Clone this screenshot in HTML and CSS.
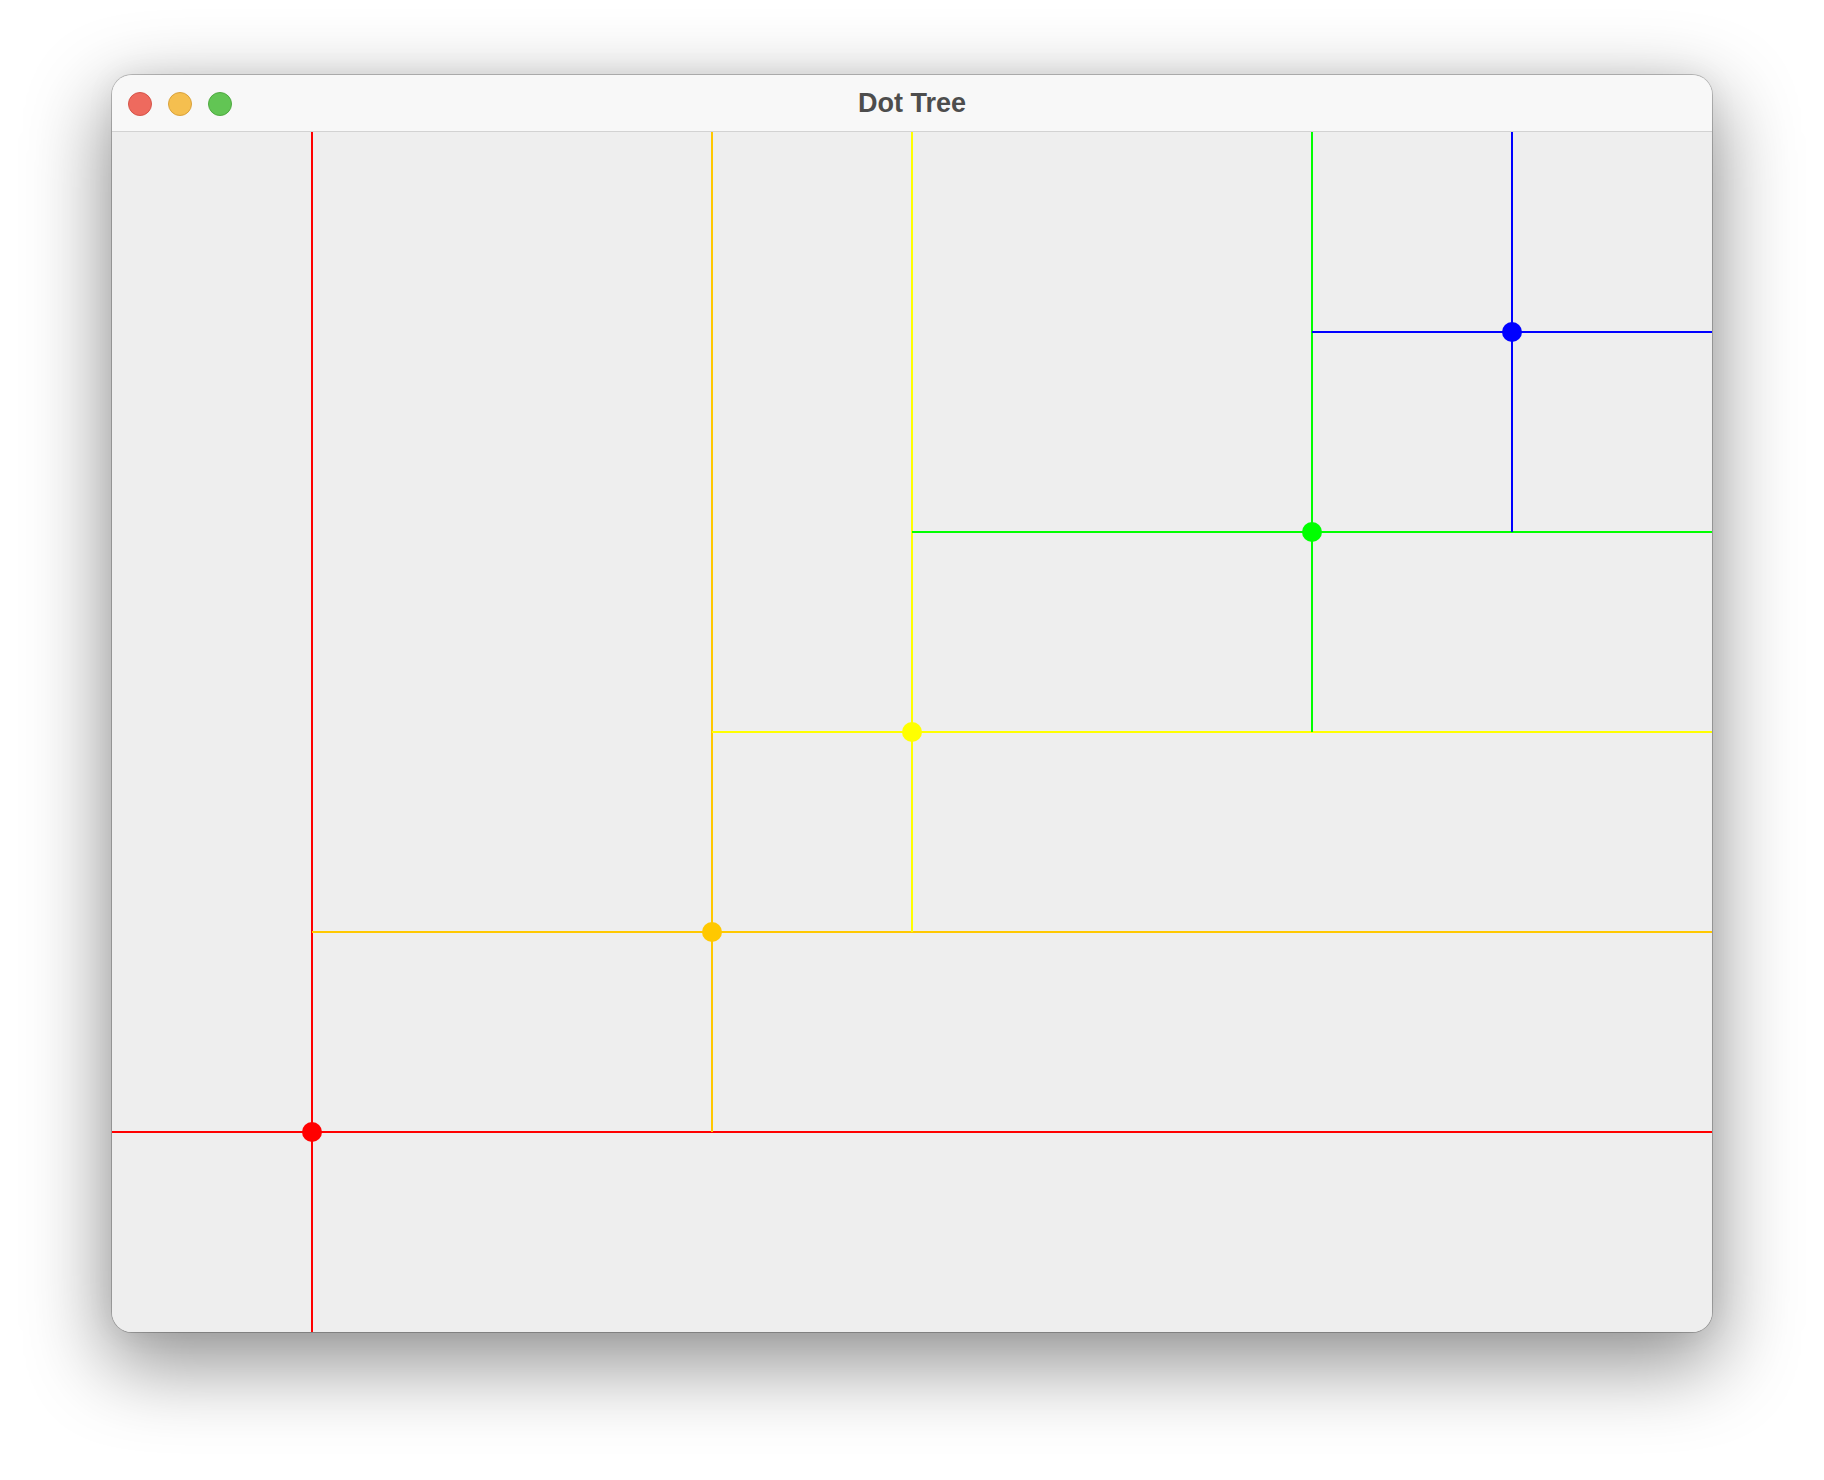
FILE: index.html
```html
<!DOCTYPE html>
<html>
<head>
<meta charset="utf-8">
<title>Dot Tree</title>
<link rel="stylesheet" href="styles.css">
</head>
<body>
<div class="window">
  <div class="titlebar">
    <div class="lights">
      <span class="light close"></span>
      <span class="light min"></span>
      <span class="light max"></span>
    </div>
    <div class="title">Dot Tree</div>
  </div>
  <div class="content">
    <svg class="canvas" width="1600" height="1200" viewBox="0 0 1600 1200" shape-rendering="crispEdges">
      <g stroke-width="2">
        <line x1="200" y1="0" x2="200" y2="1200" stroke="#ff0000"/>
        <line x1="0" y1="1000" x2="1600" y2="1000" stroke="#ff0000"/>
        <line x1="600" y1="0" x2="600" y2="1000" stroke="#ffc800"/>
        <line x1="200" y1="800" x2="1600" y2="800" stroke="#ffc800"/>
        <line x1="800" y1="0" x2="800" y2="800" stroke="#ffff00"/>
        <line x1="600" y1="600" x2="1600" y2="600" stroke="#ffff00"/>
        <line x1="1200" y1="0" x2="1200" y2="600" stroke="#00ff00"/>
        <line x1="800" y1="400" x2="1600" y2="400" stroke="#00ff00"/>
        <line x1="1400" y1="0" x2="1400" y2="400" stroke="#0000ff"/>
        <line x1="1200" y1="200" x2="1600" y2="200" stroke="#0000ff"/>
      </g>
      <g shape-rendering="auto">
        <circle cx="200" cy="1000" r="10" fill="#ff0000"/>
        <circle cx="600" cy="800" r="10" fill="#ffc800"/>
        <circle cx="800" cy="600" r="10" fill="#ffff00"/>
        <circle cx="1200" cy="400" r="10" fill="#00ff00"/>
        <circle cx="1400" cy="200" r="10" fill="#0000ff"/>
      </g>
    </svg>
  </div>
</div>
</body>
</html>
```

FILE: styles.css
```css
html, body {
  margin: 0;
  padding: 0;
  background: #ffffff;
}

body {
  width: 1824px;
  height: 1480px;
  overflow: hidden;
  padding-top: 75px;
  padding-left: 112px;
  box-sizing: border-box;
}

.window {
  width: 1600px;
  height: 1257px;
  border-radius: 20px;
  overflow: hidden;
  display: flex;
  flex-direction: column;
  background: #eeeeee;
  box-shadow: 0 0 0 1px rgba(0, 0, 0, 0.22), 0 28px 80px 6px rgba(0, 0, 0, 0.42), 0 0 30px rgba(0, 0, 0, 0.06);
}

.titlebar {
  height: 56px;
  flex: 0 0 56px;
  background: #f8f8f8;
  border-bottom: 1px solid #d2d2d2;
  position: relative;
  display: flex;
  align-items: center;
  justify-content: center;
}

.lights {
  position: absolute;
  left: 16px;
  top: 17px;
  display: flex;
  gap: 16px;
}

.light {
  width: 24px;
  height: 24px;
  border-radius: 50%;
  box-sizing: border-box;
  display: block;
}

.light.close {
  background: #ee6a5e;
  border: 1px solid #d55449;
}

.light.min {
  background: #f5bf4f;
  border: 1px solid #d9a23c;
}

.light.max {
  background: #62c554;
  border: 1px solid #4fa941;
}

.title {
  font-family: "Liberation Sans", Arial, sans-serif;
  font-weight: bold;
  font-size: 27px;
  color: #4d4d4d;
  margin-top: 1px;
}

.content {
  width: 1600px;
  height: 1200px;
  flex: 0 0 1200px;
  background: #eeeeee;
}

.canvas {
  display: block;
}
```
